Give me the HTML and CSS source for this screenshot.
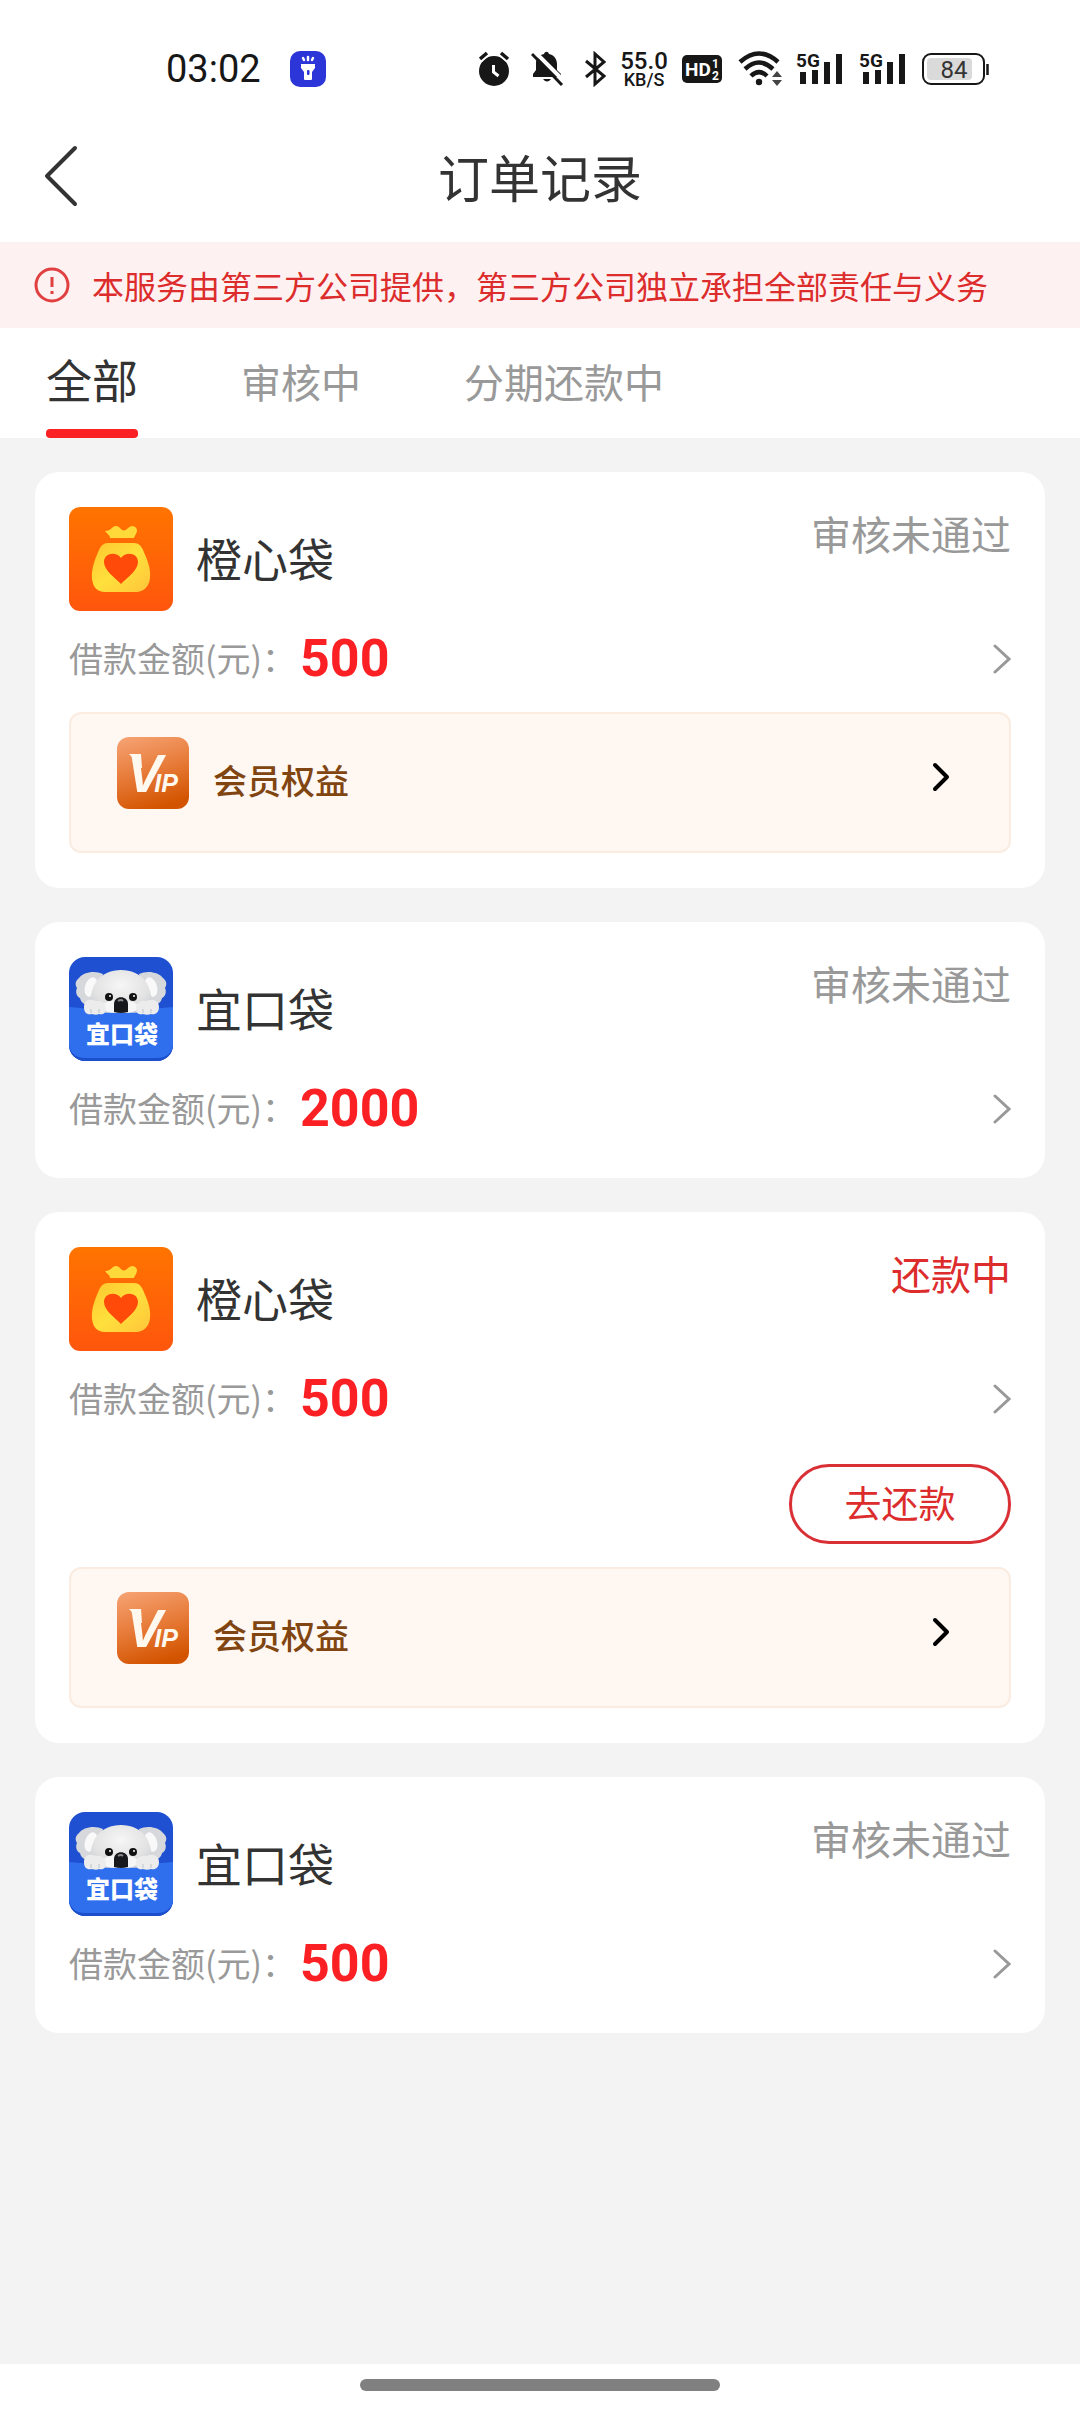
FILE: index.html
```html
<!DOCTYPE html>
<html lang="zh-CN">
<head>
<meta charset="utf-8">
<meta name="viewport" content="width=device-width">
<title>订单记录</title>
<link rel="stylesheet" href="styles.css">
</head>
<body>
<svg class="sprite" width="0" height="0" aria-hidden="true">
  <defs>
    <linearGradient id="orange" x1="0" y1="0" x2="0" y2="1"><stop offset="0" stop-color="#ff7400"/><stop offset="1" stop-color="#ff560d"/></linearGradient>
    <linearGradient id="gold" x1="0" y1="0" x2="1" y2="1"><stop offset="0" stop-color="#fdc62f"/><stop offset=".5" stop-color="#ffe03c"/><stop offset="1" stop-color="#ffc43a"/></linearGradient>
    <linearGradient id="copper" x1=".2" y1="0" x2=".5" y2="1"><stop offset="0" stop-color="#f5a070"/><stop offset=".5" stop-color="#e77b39"/><stop offset="1" stop-color="#d35400"/></linearGradient>
    <radialGradient id="fur" cx=".5" cy=".35" r=".65"><stop offset="0" stop-color="#f6f6f6"/><stop offset=".7" stop-color="#e2e2e2"/><stop offset="1" stop-color="#cfd1d5"/></radialGradient>
    <clipPath id="tile"><rect width="104" height="104" rx="16"/></clipPath>
  </defs>
  <symbol id="bag" viewBox="0 0 104 104">
    <rect width="104" height="104" rx="11" fill="url(#orange)"/>
    <path d="M36 24c3 0 5-1 7-3 3-3 6-2 8 0 2 3 5 3 7 1 3-3 6-4 8-2 3 2 2 5 1 7-1 2-2 3-2 4H41c0-3-3-4-5-7z" fill="#ffd83a"/>
    <path d="M39 36h26c5 0 7 3 9 7 4 9 8 18 7 28-1 9-6 13-13 14H36c-8 0-12-5-13-13-1-10 3-20 7-29 2-4 4-7 9-7z" fill="url(#gold)"/>
    <path d="M52 77C45 70 35 63 35 55c0-9 12-11 17-4 5-7 17-5 17 4 0 8-10 15-17 22z" fill="#ff4a0a"/>
  </symbol>
  <symbol id="koala" viewBox="0 0 104 104">
    <g clip-path="url(#tile)">
      <rect width="104" height="104" fill="#1f50d2"/>
      <path d="M0 51h104v53H0z" fill="#1b4fcb"/>
      <path d="M0 50q52 6 104 0v39q-3 12-16 12H16Q3 101 0 89z" fill="#2f6fee"/>
      <path d="M34 17c-8-4-20-2-24 4-4 3-4 7-2 10-2 4 0 9 3 10 1 6 7 8 16 8zM70 17c8-4 20-2 24 4 4 3 4 7 2 10 2 4 0 9-3 10-1 6-7 8-16 8z" fill="#d6d8dc"/>
      <ellipse cx="22" cy="30" rx="6" ry="10" fill="#f9f9f9" transform="rotate(18 22 30)"/><ellipse cx="82" cy="30" rx="6" ry="10" fill="#f9f9f9" transform="rotate(-18 82 30)"/>
      <path d="M22 56C18 27 32 13 52 13s34 14 30 43z" fill="url(#fur)"/>
      <ellipse cx="51" cy="50" rx="18" ry="7" fill="#f6f6f6"/>
      <path d="M22 55q30 2 60 0v6H22z" fill="#2f6fee"/>
      <circle cx="40" cy="40" r="4" fill="#111"/><circle cx="64" cy="40" r="4" fill="#111"/>
      <circle cx="41" cy="39" r="1" fill="#fff"/><circle cx="65" cy="39" r="1" fill="#fff"/>
      <path d="M45 55V47c0-9 14-9 14 0v8q-7 2-14 0z" fill="#17181c"/><path d="M49 44q3-2 5 0" stroke="#888" stroke-width="2" fill="none"/>
      <path d="M15 50c0-9 9-8 12-6 7-1 10 3 10 8 0 4-3 6-7 5-2 1-4 1-7 0-5 1-8-1-8-7zM67 52c0-5 3-9 10-8 4-2 13-2 13 6 0 6-4 8-8 7-3 1-5 1-8 0-4 1-7-1-7-5z" fill="#ececec"/>
      <path d="M22 52v4M30 52v4M74 52v4M82 52v4" stroke="#bfc1c6" stroke-width="1"/>
    </g>
  </symbol>
  <symbol id="vip" viewBox="0 0 72 72">
    <rect width="72" height="72" rx="12" fill="url(#copper)"/>
    <path d="M12 17h12l1 14-8-1-1-9z" fill="#fff8ee"/>
  </symbol>
  <symbol id="signal" viewBox="0 0 51 36">
    <path d="M7 24v6M19 22v8M31 14v16M43 6v24" stroke="#171717" stroke-width="6" stroke-linecap="square"/>
  </symbol>
  <symbol id="next" viewBox="0 0 18 30"><path d="M2 2l14 13L2 28" fill="none" stroke="#999" stroke-width="3" stroke-linecap="round"/></symbol>
  <symbol id="next-bold" viewBox="0 0 18 30"><path d="M3 3l12 12L3 27" fill="none" stroke="#000" stroke-width="4" stroke-linecap="round" stroke-linejoin="round"/></symbol>
</svg>

<div class="page">
  <div class="status-bar">
    <div class="status-left">
      <span class="clock">03:02</span>
      <svg width="36" height="36" viewBox="0 0 36 36"><rect width="36" height="36" rx="10" fill="#2b35d8"/><path d="M13 7l1 2M18 6v3M23 7l-1 2" stroke="#fff" stroke-width="2.500" stroke-linecap="round"/><path d="M11 13h14v4l-3 4v7q0 1-1 1h-6q-1 0-1-1v-7l-3-4z" fill="#fff"/><rect x="17" y="19" width="2.500" height="5" rx="1" fill="#2b35d8"/></svg>
    </div>
    <div class="status-right">
      <svg width="40" height="36" viewBox="0 0 40 36"><circle cx="15" cy="20" r="15" fill="#171717"/><path d="M1 8l7-6M22 2l7 6" stroke="#fff" stroke-width="7"/><path d="M1 8l7-6M22 2l7 6" stroke="#171717" stroke-width="3.500"/><path d="M14.500 14v7l5 4" stroke="#fff" stroke-width="3" fill="none"/></svg>
      <svg width="42" height="36" viewBox="0 0 42 36"><path d="M2 26v-3l3-4v-7c0-5 3-8 8-9 1-3 4-3 5 0 5 1 8 5 8 10v6l4 4v3z" fill="#171717"/><path d="M12 28h8q-4 5-8 0z" fill="#171717"/><path d="M3 0l31 31" stroke="#fff" stroke-width="4"/><path d="M1 3l30 31" stroke="#171717" stroke-width="3"/></svg>
      <svg width="21" height="36" viewBox="0 0 21 36"><path d="M1 10l18 15-9 8V3l9 8L1 26" stroke="#171717" stroke-width="3" fill="none"/></svg>
      <span class="speed"><span>55.0</span><small>KB/S</small></span>
      <svg width="40" height="36" viewBox="0 0 40 36"><rect y="4" width="40" height="28" rx="5" fill="#171717"/><text class="hd" x="3" y="25">HD</text><text class="hd-small" x="30" y="17">1</text><text class="hd-small" x="30" y="29">2</text></svg>
      <svg width="50" height="36" viewBox="0 0 50 36"><path d="M6 11q19-17 38 0M11 18q14-13 28 0M17 25q8-8 16 0" fill="none" stroke="#171717" stroke-width="4.500"/><circle cx="25" cy="31" r="3.200" fill="#171717"/><path d="M38 26l5-6 5 6zM38 29l5 6 5-6z" fill="#444"/></svg>
      <svg width="51" height="36" viewBox="0 0 51 36"><use href="#signal"/><text class="five-g" x="0" y="16">5G</text></svg>
      <svg width="51" height="36" viewBox="0 0 51 36"><use href="#signal"/><text class="five-g" x="0" y="16">5G</text></svg>
      <svg width="67" height="36" viewBox="0 0 67 36"><rect x="1" y="3" width="61" height="30" rx="8" fill="#fff" stroke="#171717" stroke-width="2"/><rect x="5" y="7" width="45" height="22" rx="4" fill="#dadada"/><path d="M65.500 13v11" stroke="#171717" stroke-width="2.500"/><text class="battery" x="32" y="27" text-anchor="middle">84</text></svg>
    </div>
  </div>

  <header class="title-bar">
    <button class="back" type="button" aria-label="返回"><svg width="36" height="64" viewBox="0 0 36 64"><path d="M32 4L4 32l28 28" fill="none" stroke="#333" stroke-width="4" stroke-linecap="round" stroke-linejoin="round"/></svg></button>
    <h1>订单记录</h1>
  </header>

  <div class="notice">
    <svg width="36" height="36" viewBox="0 0 36 36"><circle cx="18" cy="18" r="16" fill="none" stroke="#e04040" stroke-width="3"/><path d="M18 10v10M18 24v3" stroke="#e04040" stroke-width="3"/></svg>
    <span>本服务由第三方公司提供，第三方公司独立承担全部责任与义务</span>
  </div>

  <nav class="tabs">
    <button class="tab active" type="button">全部</button>
    <button class="tab" type="button">审核中</button>
    <button class="tab" type="button">分期还款中</button>
  </nav>

  <main class="orders">
    <article class="card">
      <div class="card-head"><svg class="logo"><use href="#bag"/></svg><h2>橙心袋</h2><span class="state">审核未通过</span></div>
      <a class="amount" href="#"><span class="label">借款金额(元)：</span><strong>500</strong><svg class="arrow"><use href="#next"/></svg></a>
      <a class="member" href="#"><svg class="vip" viewBox="0 0 72 72"><use href="#vip"/><text class="vip-text" x="10" y="55">V<tspan class="vip-small" dx="-8">IP</tspan></text></svg><span>会员权益</span><svg class="arrow"><use href="#next-bold"/></svg></a>
    </article>

    <article class="card">
      <div class="card-head"><svg class="logo" viewBox="0 0 104 104"><use href="#koala"/><text class="koala-text" x="53" y="86" text-anchor="middle">宜口袋</text></svg><h2>宜口袋</h2><span class="state">审核未通过</span></div>
      <a class="amount" href="#"><span class="label">借款金额(元)：</span><strong>2000</strong><svg class="arrow"><use href="#next"/></svg></a>
    </article>

    <article class="card">
      <div class="card-head"><svg class="logo"><use href="#bag"/></svg><h2>橙心袋</h2><span class="state due">还款中</span></div>
      <a class="amount" href="#"><span class="label">借款金额(元)：</span><strong>500</strong><svg class="arrow"><use href="#next"/></svg></a>
      <button class="repay" type="button">去还款</button>
      <a class="member" href="#"><svg class="vip" viewBox="0 0 72 72"><use href="#vip"/><text class="vip-text" x="10" y="55">V<tspan class="vip-small" dx="-8">IP</tspan></text></svg><span>会员权益</span><svg class="arrow"><use href="#next-bold"/></svg></a>
    </article>

    <article class="card">
      <div class="card-head"><svg class="logo" viewBox="0 0 104 104"><use href="#koala"/><text class="koala-text" x="53" y="86" text-anchor="middle">宜口袋</text></svg><h2>宜口袋</h2><span class="state">审核未通过</span></div>
      <a class="amount" href="#"><span class="label">借款金额(元)：</span><strong>500</strong><svg class="arrow"><use href="#next"/></svg></a>
    </article>
  </main>

  <footer class="home-bar"><span class="home-pill"></span></footer>
</div>
</body>
</html>
```
FILE: styles.css
```css
* { box-sizing: border-box; }

body {
  margin: 0;
  background: #f3f3f3;
  color: #333;
  font-family: "Noto Sans CJK SC", sans-serif;
}

h1, h2 { margin: 0; font-weight: 400; }
a { color: inherit; text-decoration: none; }
button { padding: 0; border: 0; background: none; color: inherit; font: inherit; cursor: pointer; }
svg { display: block; flex: none; }
.sprite { position: absolute; }

.page { display: flex; flex-direction: column; min-height: 100vh; }

/* Phone status bar */
.status-bar {
  display: flex;
  justify-content: space-between;
  align-items: center;
  height: 138px;
  padding: 0 91px 0 166px;
  background: #fff;
  color: #171717;
}
.status-left, .status-right { display: flex; align-items: center; }
.status-left { gap: 29px; }
.status-right { gap: 12px; }
.clock { font: 38px/44px Roboto, sans-serif; }
.speed {
  display: flex;
  flex-direction: column;
  align-items: center;
  width: 52px;
  padding-top: 2px;
  font: 500 24px/20px Roboto, sans-serif;
}
.speed small { font-size: 18px; line-height: 18px; }
.five-g { font: 700 19px Roboto, sans-serif; fill: #171717; }
.hd { font: 700 19px Roboto, sans-serif; fill: #fff; }
.hd-small { font: 700 12px Roboto, sans-serif; fill: #fff; }
.battery { font: 24px Roboto, sans-serif; fill: #333; }

/* Title */
.title-bar {
  display: grid;
  grid-template-columns: 120px 1fr 120px;
  align-items: center;
  height: 104px;
  padding-bottom: 28px;
  background: #fff;
}
.back { padding-left: 43px; }
.title-bar h1 { font-size: 51px; line-height: 72px; text-align: center; }

.notice {
  display: flex;
  align-items: center;
  gap: 22px;
  height: 86px;
  padding: 0 34px;
  background: #fef1f2;
  color: #dc2c2c;
  font-size: 32px;
  line-height: 44px;
  white-space: nowrap;
}

.tabs {
  display: flex;
  gap: 103px;
  height: 110px;
  padding: 0 46px;
  background: #fff;
}
.tab { padding-top: 4px; border-bottom: 9px solid transparent; color: #999; font-size: 40px; }
.tab.active { position: relative; padding: 0 0 2px; color: #333; font-size: 46px; }
.tab.active::after {
  content: "";
  position: absolute;
  left: 0;
  right: 0;
  bottom: -9px;
  height: 9px;
  border-radius: 4px;
  background: #fb2024;
}

/* Order cards */
.orders {
  display: flex;
  flex: 1;
  flex-direction: column;
  gap: 34px;
  padding: 34px 35px;
}
.card {
  display: flex;
  flex-direction: column;
  padding: 35px 34px;
  border-radius: 24px;
  background: #fff;
}
.card-head { display: flex; align-items: center; gap: 23px; }
.logo { width: 104px; height: 104px; }
.card-head h2 { padding-bottom: 5px; font-size: 46px; line-height: 64px; }
.state {
  align-self: flex-start;
  margin-left: auto;
  color: #999;
  font-size: 40px;
  line-height: 52px;
}
.state.due { color: #dc2c2c; }

.amount { display: flex; align-items: center; height: 69px; margin-top: 13px; }
.label { margin-right: 4px; padding-bottom: 3px; color: #999; font-size: 34px; }
.amount strong { color: #fb2024; font: 700 52px/60px Roboto, sans-serif; }
.arrow { width: 18px; height: 30px; margin-left: auto; }

.repay {
  align-self: flex-end;
  width: 222px;
  height: 80px;
  margin: 31px 0 4px;
  padding-bottom: 4px;
  border: 3px solid #d93036;
  border-radius: 40px;
  color: #dc2c2c;
  font-size: 37px;
  line-height: 50px;
}

.member {
  display: flex;
  align-items: flex-start;
  height: 141px;
  margin-top: 19px;
  padding: 23px 59px 0 46px;
  border: 2px solid #faece1;
  border-radius: 12px;
  background: #fff7f1;
  color: #804510;
  font-size: 34px;
  font-weight: 500;
  line-height: 86px;
}
.member span { margin-left: 24px; }
.member .arrow { margin-top: 25px; }
.vip { width: 72px; height: 72px; }
.vip-text { font: italic 700 53px "Liberation Sans", sans-serif; fill: #fff8ee; }
.vip-small { font-size: 25px; }
.koala-text { font: 900 24px "Noto Sans CJK SC", sans-serif; fill: #fff; }

.home-bar { display: flex; justify-content: center; height: 48px; padding-top: 15px; background: #fff; }
.home-pill { width: 360px; height: 12px; border-radius: 6px; background: #808080; }
```
